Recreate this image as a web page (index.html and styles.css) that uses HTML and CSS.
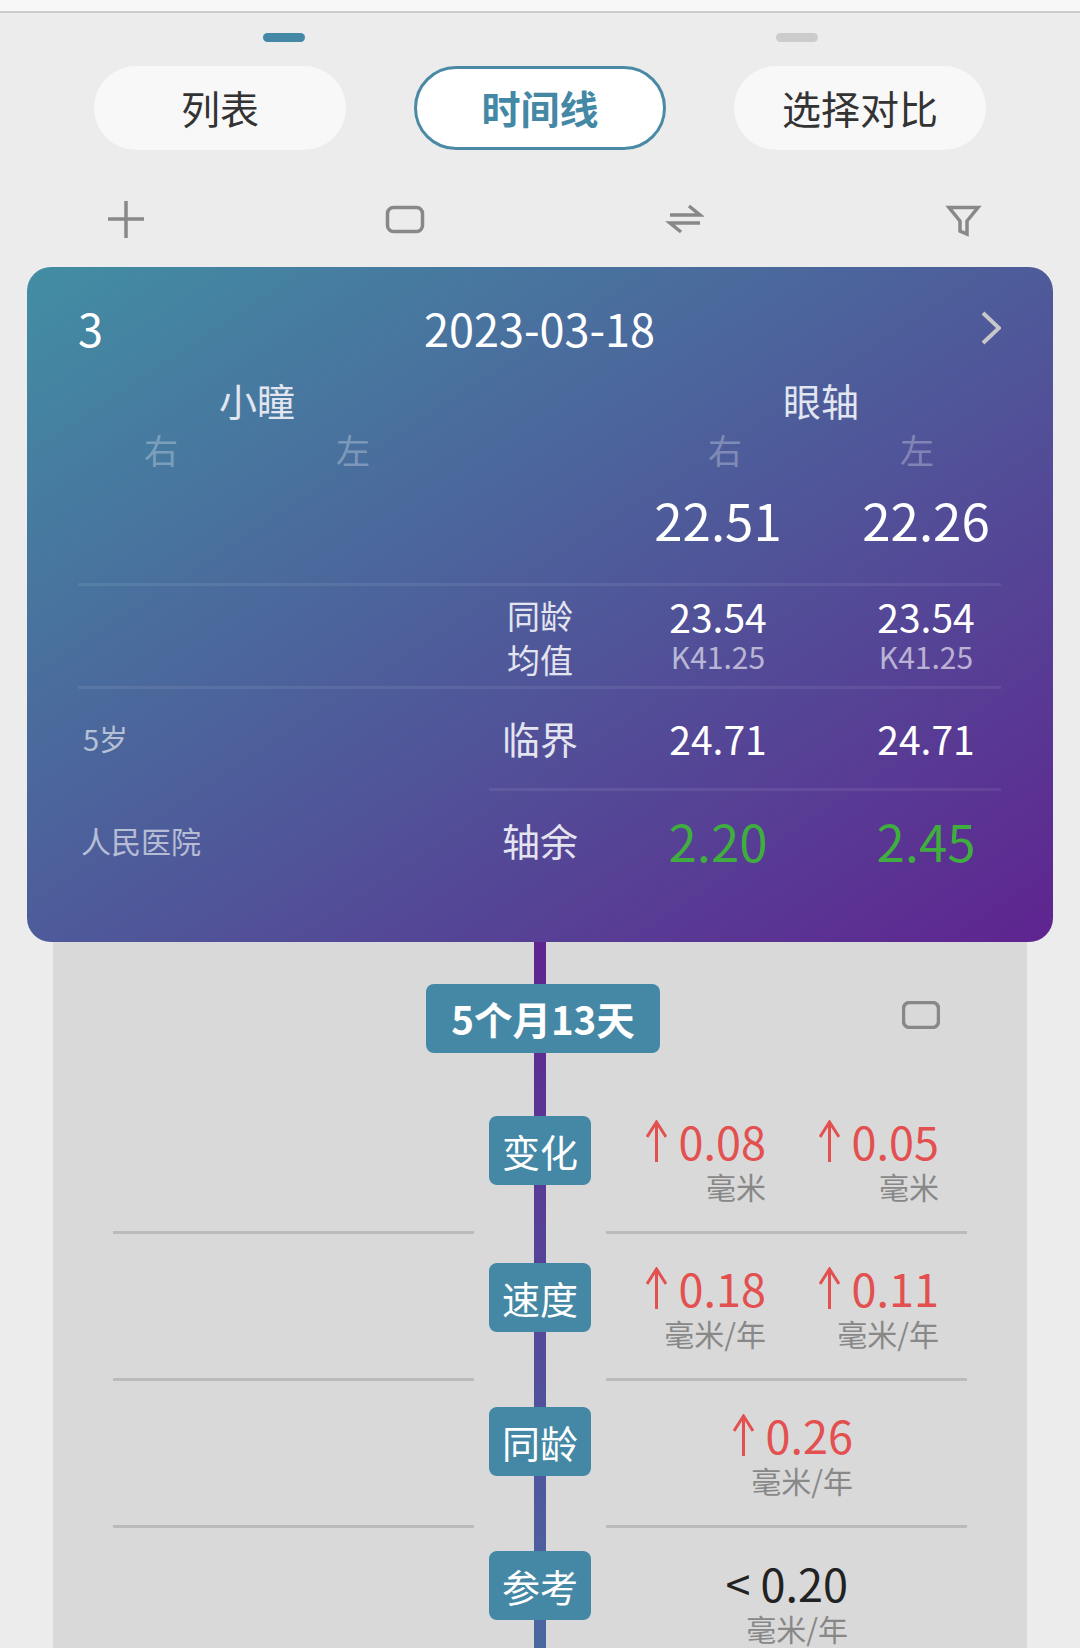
FILE: index.html
```html
<!DOCTYPE html>
<html lang="zh-CN">
<head>
    <meta charset="UTF-8">
    <meta name="viewport" content="width=device-width, initial-scale=1.0">
    <title>时间线</title>
    <link rel="stylesheet" href="styles.css">
</head>
<body>
    <div class="top-strip"></div>

    <div class="pager">
        <span class="pager-dot pager-dot-on"></span>
        <span class="pager-dot"></span>
    </div>

    <div class="tabs">
        <div class="tab">列表</div>
        <div class="tab tab-on">时间线</div>
        <div class="tab">选择对比</div>
    </div>

    <div class="tools">
        <svg class="tool-icon" viewBox="0 0 40 40"><path d="M2 20H38M20 2V39"/></svg>
        <svg class="tool-icon" viewBox="0 0 40 40"><rect x="2.5" y="8.5" width="35" height="24" rx="6"/></svg>
        <svg class="tool-icon" viewBox="0 0 40 40"><path d="M6 16H36L25 7M36 24H6L17 33"/></svg>
        <svg class="tool-icon" viewBox="0 0 40 40"><path d="M6 8.5H35L24 22V35L17 32V22Z"/></svg>
    </div>

    <div class="card">
        <div class="card-head">
            <span>3</span>
            <span class="card-date">2023-03-18</span>
            <svg class="card-next" viewBox="0 0 20 34"><path d="M2 2L18 17L2 32"/></svg>
        </div>

        <div class="eyes">
            <div class="eyes-title eyes-left">小瞳</div>
            <div class="eyes-title eyes-right">眼轴</div>
            <div class="eye-side">右</div>
            <div class="eye-side">左</div>
            <div></div>
            <div class="eye-side">右</div>
            <div class="eye-side">左</div>
        </div>

        <div class="card-body">
            <div class="row row-main">
                <div></div>
                <div></div>
                <div class="num num-big val-r">22.51</div>
                <div class="num num-big">22.26</div>
            </div>
            <div class="rule"></div>
            <div class="row row-avg">
                <div></div>
                <div class="row-name row-name-small">同龄<br>均值</div>
                <div class="val-r">
                    <div class="num num-mid">23.54</div>
                    <div class="num-k">K41.25</div>
                </div>
                <div>
                    <div class="num num-mid">23.54</div>
                    <div class="num-k">K41.25</div>
                </div>
            </div>
            <div class="rule"></div>
            <div class="row row-limit">
                <div class="row-note">5岁</div>
                <div class="row-name">临界</div>
                <div class="num num-mid val-r">24.71</div>
                <div class="num num-mid">24.71</div>
            </div>
            <div class="rule rule-short"></div>
            <div class="row row-rest">
                <div class="row-note row-note-wide">人民医院</div>
                <div class="row-name">轴余</div>
                <div class="num num-big num-green val-r">2.20</div>
                <div class="num num-big num-green">2.45</div>
            </div>
        </div>
    </div>

    <div class="panel">
        <div class="panel-line"></div>

        <div class="gap-row">
            <div class="gap-badge">5个月13天</div>
            <svg class="gap-icon" viewBox="0 0 38 28"><rect x="1.5" y="1.5" width="35" height="25" rx="6"/></svg>
        </div>

        <div class="metric">
            <div class="metric-badge">变化</div>
            <div class="metric-vals">
                <div class="metric-val">
                    <div class="up">
                        <svg class="up-arrow" viewBox="0 0 21 42"><path d="M10.5 42V2M1 17L10.5 2L20 17"/></svg>
                        <span>0.08</span>
                    </div>
                    <div class="unit">毫米</div>
                </div>
                <div class="metric-val">
                    <div class="up">
                        <svg class="up-arrow" viewBox="0 0 21 42"><path d="M10.5 42V2M1 17L10.5 2L20 17"/></svg>
                        <span>0.05</span>
                    </div>
                    <div class="unit">毫米</div>
                </div>
            </div>
            <div class="metric-rule metric-rule-left"></div>
            <div class="metric-rule metric-rule-right"></div>
        </div>

        <div class="metric metric-speed">
            <div class="metric-badge">速度</div>
            <div class="metric-vals">
                <div class="metric-val">
                    <div class="up">
                        <svg class="up-arrow" viewBox="0 0 21 42"><path d="M10.5 42V2M1 17L10.5 2L20 17"/></svg>
                        <span>0.18</span>
                    </div>
                    <div class="unit">毫米/年</div>
                </div>
                <div class="metric-val">
                    <div class="up">
                        <svg class="up-arrow" viewBox="0 0 21 42"><path d="M10.5 42V2M1 17L10.5 2L20 17"/></svg>
                        <span>0.11</span>
                    </div>
                    <div class="unit">毫米/年</div>
                </div>
            </div>
            <div class="metric-rule metric-rule-left"></div>
            <div class="metric-rule metric-rule-right"></div>
        </div>

        <div class="metric metric-age">
            <div class="metric-badge">同龄</div>
            <div class="metric-one">
                <div class="up">
                    <svg class="up-arrow" viewBox="0 0 21 42"><path d="M10.5 42V2M1 17L10.5 2L20 17"/></svg>
                    <span>0.26</span>
                </div>
                <div class="unit">毫米/年</div>
            </div>
            <div class="metric-rule metric-rule-left"></div>
            <div class="metric-rule metric-rule-right"></div>
        </div>

        <div class="metric metric-ref">
            <div class="metric-badge">参考</div>
            <div class="metric-one">
                <div class="ref-val">&lt; 0.20</div>
                <div class="unit">毫米/年</div>
            </div>
        </div>
    </div>
</body>
</html>
```

FILE: styles.css
```css
* {
    box-sizing: border-box;
}
html, body {
    height: 1648px;
    overflow: hidden;
}
body {
    margin: 0;
    font-family: "Noto Sans CJK SC", "Noto Sans", sans-serif;
    background-color: #ececec;
    color: #333333;
}

.top-strip {
    height: 13px;
    background: #f7f7f7;
    border-bottom: 2px solid #cccccc;
}

.pager {
    display: flex;
    gap: 471px;
    margin-top: 20px;
    padding-left: 263px;
}
.pager-dot {
    width: 42px;
    height: 9px;
    border-radius: 5px;
    background: #cccccc;
}
.pager-dot-on {
    background: #4488a5;
}

.tabs {
    display: flex;
    gap: 68px;
    margin-top: 24px;
    padding-left: 94px;
}
.tab {
    width: 252px;
    height: 84px;
    border-radius: 42px;
    background: #f8f8f8;
    font-size: 39px;
    line-height: 82px;
    text-align: center;
}
.tab-on {
    background: #ffffff;
    border: 3px solid #4a8aa5;
    color: #4488a5;
    font-weight: 700;
    line-height: 76px;
}

.tools {
    display: flex;
    gap: 239px;
    margin-top: 49px;
    padding-left: 106px;
}
.tool-icon {
    width: 40px;
    height: 40px;
    fill: none;
    stroke: #888888;
    stroke-width: 3.5;
}

.card {
    height: 675px;
    margin: 28px 27px 0;
    padding-top: 28px;
    border-radius: 24px;
    background: linear-gradient(to bottom right, #428ea3, #4e5b9a 50%, #5f2490);
    color: #ffffff;
    position: relative;
    z-index: 1;
}
.card-head {
    display: grid;
    grid-template-columns: 1fr auto 1fr;
    align-items: center;
    height: 60px;
    padding: 0 52px 0 51px;
    font-size: 45px;
}
.card-next {
    justify-self: end;
    width: 20px;
    height: 34px;
    fill: none;
    stroke: #c8c8cc;
    stroke-width: 4;
}

.eyes {
    display: grid;
    grid-template-columns: 192px 192px 180px 192px 192px;
    padding: 19px 40px 0 38px;
    text-align: center;
}
.eyes-title {
    font-size: 38px;
    line-height: 51px;
    color: #e2e6f0;
}
.eyes-left {
    grid-column: 1 / 3;
}
.eyes-right {
    grid-column: 4 / 6;
}
.eye-side {
    font-size: 34px;
    line-height: 50px;
    color: rgba(255, 255, 255, 0.3);
}

.card-body {
    padding: 0 52px 0 51px;
}
.row {
    display: grid;
    grid-template-columns: 412px 100px 1fr 150px;
    align-items: center;
    text-align: center;
}
.row-main {
    height: 108px;
    align-items: start;
    padding-top: 11px;
}
.row-avg {
    height: 100px;
    align-items: start;
    padding-top: 7px;
}
.row-limit {
    height: 99px;
    padding-bottom: 2px;
}
.row-rest {
    height: 100px;
    padding-bottom: 2px;
}
.val-r {
    padding-right: 5px;
}
.rule {
    height: 3px;
    background: rgba(255, 255, 255, 0.08);
}
.rule-short {
    margin-left: 411px;
}

.row-name {
    font-size: 38px;
    line-height: 50px;
    color: #e4e4f0;
}
.row-name-small {
    font-size: 33px;
    line-height: 44px;
}
.row-note {
    padding-left: 5px;
    font-size: 29px;
    text-align: left;
    color: rgba(255, 255, 255, 0.6);
}
.row-note-wide {
    padding-left: 3px;
    font-size: 30px;
}

.num-big {
    font-size: 51px;
    line-height: 66px;
}
.num-mid {
    font-size: 39px;
    line-height: 46px;
}
.num-k {
    margin-top: 1px;
    font-size: 30px;
    line-height: 32px;
    color: rgba(255, 255, 255, 0.6);
}
.num-green {
    color: #3fae3f;
}

.panel {
    height: 706px;
    margin: 0 53px;
    padding: 42px 61px 0 60px;
    background: #d9d9d9;
    position: relative;
}
.panel-line {
    position: absolute;
    top: 0;
    bottom: 0;
    left: 481px;
    width: 12px;
    background: linear-gradient(to bottom, #5f2490, #4a68a0);
}

.gap-row {
    display: grid;
    grid-template-columns: 234px 1fr;
    align-items: center;
    margin-left: 313px;
    position: relative;
}
.gap-badge {
    height: 69px;
    border-radius: 8px;
    background: #4488a5;
    color: #ffffff;
    font-size: 38.5px;
    font-weight: 700;
    line-height: 69px;
    text-align: center;
    white-space: nowrap;
}
.gap-icon {
    justify-self: end;
    width: 38px;
    height: 28px;
    margin: 0 26px 7px 0;
    fill: none;
    stroke: #888888;
    stroke-width: 3.5;
}

.metric {
    display: grid;
    grid-template-columns: 361px 102px 361px;
    column-gap: 15px;
    align-items: start;
    padding-bottom: 29px;
    position: relative;
}
.gap-row + .metric {
    margin-top: 63px;
}
.metric-speed {
    padding-bottom: 26px;
}
.metric-age {
    padding-bottom: 23px;
}
.metric-badge {
    grid-column: 2;
    height: 69px;
    border-radius: 8px;
    background: #4488a5;
    color: #ffffff;
    font-size: 38px;
    line-height: 69px;
    text-align: center;
}
.metric-vals {
    display: grid;
    grid-template-columns: 160px 173px;
    padding-top: 3px;
}
.metric-one {
    padding: 6px 114px 0 0;
}
.metric-ref .metric-one {
    padding: 10px 119px 0 0;
}
.metric-rule {
    grid-row: 2;
    height: 3px;
    margin-top: 30px;
    background: #bbbbbb;
}
.metric-rule-left {
    grid-column: 1;
}
.metric-rule-right {
    grid-column: 3;
}

.up {
    display: flex;
    justify-content: flex-end;
    align-items: center;
    gap: 12px;
    color: #e35050;
    font-size: 45px;
    line-height: 44px;
}
.up-arrow {
    width: 21px;
    height: 42px;
    fill: none;
    stroke: #e35050;
    stroke-width: 3;
}
.unit {
    margin-top: 8px;
    color: #888888;
    font-size: 30px;
    line-height: 30px;
    text-align: right;
}
.ref-val {
    color: #222222;
    font-size: 45px;
    line-height: 44px;
    text-align: right;
}
```
